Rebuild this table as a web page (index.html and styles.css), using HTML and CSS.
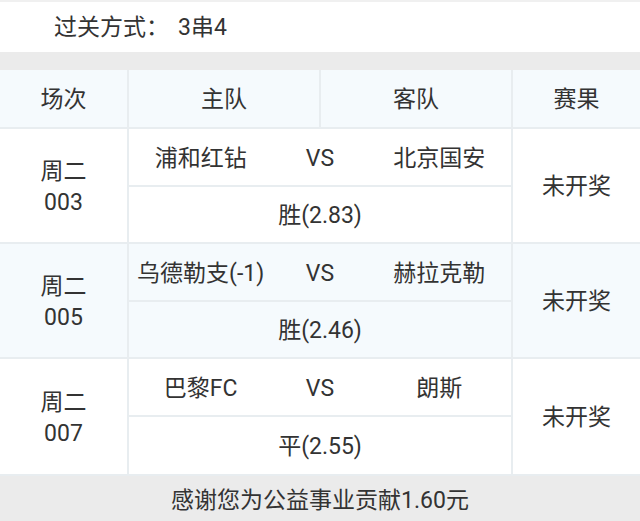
FILE: index.html
```html
<!DOCTYPE html>
<html lang="zh">
<head>
<meta charset="utf-8">
<link rel="stylesheet" href="styles.css">
</head>
<body>
<div class="page">
  <div class="mode"><span class="mode-label">过关方式：</span><span class="mode-value">3串4</span></div>
  <div class="gap"></div>
  <table class="bets">
    <colgroup><col class="c1"><col class="c2"><col class="c3"><col class="c4"></colgroup>
    <thead>
      <tr><th>场次</th><th>主队</th><th>客队</th><th>赛果</th></tr>
    </thead>
    <tbody>
      <tr class="odd">
        <td rowspan="2" class="num">周二<br>003</td>
        <td colspan="2" class="teams"><div class="match"><span>浦和红钻</span><span>VS</span><span>北京国安</span></div></td>
        <td rowspan="2" class="res">未开奖</td>
      </tr>
      <tr class="odd"><td colspan="2" class="pick">胜(2.83)</td></tr>
      <tr class="even">
        <td rowspan="2" class="num">周二<br>005</td>
        <td colspan="2" class="teams"><div class="match"><span>乌德勒支(-1)</span><span>VS</span><span>赫拉克勒</span></div></td>
        <td rowspan="2" class="res">未开奖</td>
      </tr>
      <tr class="even"><td colspan="2" class="pick">胜(2.46)</td></tr>
      <tr class="odd">
        <td rowspan="2" class="num">周二<br>007</td>
        <td colspan="2" class="teams"><div class="match"><span>巴黎FC</span><span>VS</span><span>朗斯</span></div></td>
        <td rowspan="2" class="res">未开奖</td>
      </tr>
      <tr class="odd"><td colspan="2" class="pick pick-last">平(2.55)</td></tr>
    </tbody>
  </table>
  <div class="footer">感谢您为公益事业贡献1.60元</div>
</div>
</body>
</html>
```

FILE: styles.css
```css
* { box-sizing: border-box; }
html, body { margin: 0; padding: 0; background: #fff; }
body {
  font-family: "Roboto", "Noto Sans CJK SC", sans-serif;
  color: #333;
  font-size: 23px;
  line-height: 30px;
}
.page { width: 640px; }
.mode {
  border-top: 2px solid #f0f0f0;
  height: 52px;
  display: flex;
  align-items: center;
  padding-left: 54px;
  padding-top: 2px;
}
.mode-label { width: 124px; }
.gap { height: 18px; background: #ebebeb; }
.bets {
  width: 640px;
  table-layout: fixed;
  border-collapse: collapse;
}
.c1 { width: 128px; }
.c2 { width: 192px; }
.c3 { width: 192px; }
.c4 { width: 128px; }
.bets th, .bets td {
  border: 2px solid #e8edf0;
  padding: 3px 0 0;
  text-align: center;
  font-weight: normal;
  vertical-align: middle;
  white-space: nowrap;
}
.bets tr > :first-child { border-left: none; }
.bets tr > :last-child { border-right: none; }
.bets thead th { height: 58px; background: #f5fafd; border-top: none; }
.bets .even td { background: #f5fafd; }
.bets .odd td { background: #fff; }
.num { line-height: 31px; }
.teams { height: 58px; }
.pick { height: 57px; }
.pick-last { height: 59px; }
.match {
  display: grid;
  grid-template-columns: minmax(0, 1fr) minmax(0, 1fr) minmax(0, 1fr);
  padding: 0 12px;
  line-height: 30px;
}
.match > span {
  display: flex;
  justify-content: center;
}
.footer {
  height: 47px;
  background: #ebebeb;
  display: flex;
  align-items: center;
  justify-content: center;
  padding-top: 2px;
}
```
